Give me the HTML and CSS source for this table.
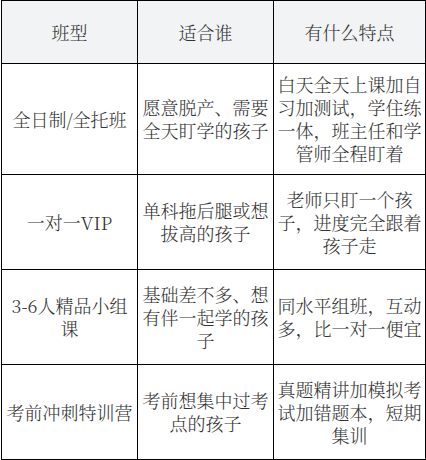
FILE: index.html
```html
<!DOCTYPE html>
<html lang="zh-CN">
<head>
<meta charset="utf-8">
<title>班型对比</title>
<link rel="stylesheet" href="styles.css">
</head>
<body>
<div class="table">
  <div class="cell head">班型</div>
  <div class="cell head">适合谁</div>
  <div class="cell head">有什么特点</div>

  <div class="cell">全日制/全托班</div>
  <div class="cell">愿意脱产、需要全天盯学的孩子</div>
  <div class="cell">白天全天上课加自习加测试，学住练一体，班主任和学管师全程盯着</div>

  <div class="cell">一对一VIP</div>
  <div class="cell">单科拖后腿或想拔高的孩子</div>
  <div class="cell">老师只盯一个孩子，进度完全跟着孩子走</div>

  <div class="cell">3-6人精品小组课</div>
  <div class="cell">基础差不多、想有伴一起学的孩子</div>
  <div class="cell">同水平组班，互动多，比一对一便宜</div>

  <div class="cell">考前冲刺特训营</div>
  <div class="cell">考前想集中过考点的孩子</div>
  <div class="cell">真题精讲加模拟考试加错题本，短期集训</div>
</div>
</body>
</html>
```

FILE: styles.css
```css
html, body {
  margin: 0;
  padding: 0;
  background: #ffffff;
}

body {
  font-family: "Noto Serif CJK SC", "Noto Sans CJK SC", serif;
  font-size: 18px;
  font-weight: 300;
  line-height: 23px;
  color: #333333;
}

.table {
  display: grid;
  grid-template-columns: 136px 136px 152px;
  grid-template-rows: 63px;
  grid-auto-rows: minmax(95px, auto);
  width: 425px;
  box-sizing: border-box;
  margin-left: 1px;
  border-left: 1px solid #000;
  border-top: 1px solid #000;
}

.cell {
  box-sizing: border-box;
  display: flex;
  align-items: center;
  justify-content: center;
  text-align: center;
  padding: 9px 3px;
  border-right: 1px solid #000;
  border-bottom: 1px solid #000;
  word-break: break-all;
}

.head {
  background: #f2f3f5;
  padding: 0 3px;
}
```
